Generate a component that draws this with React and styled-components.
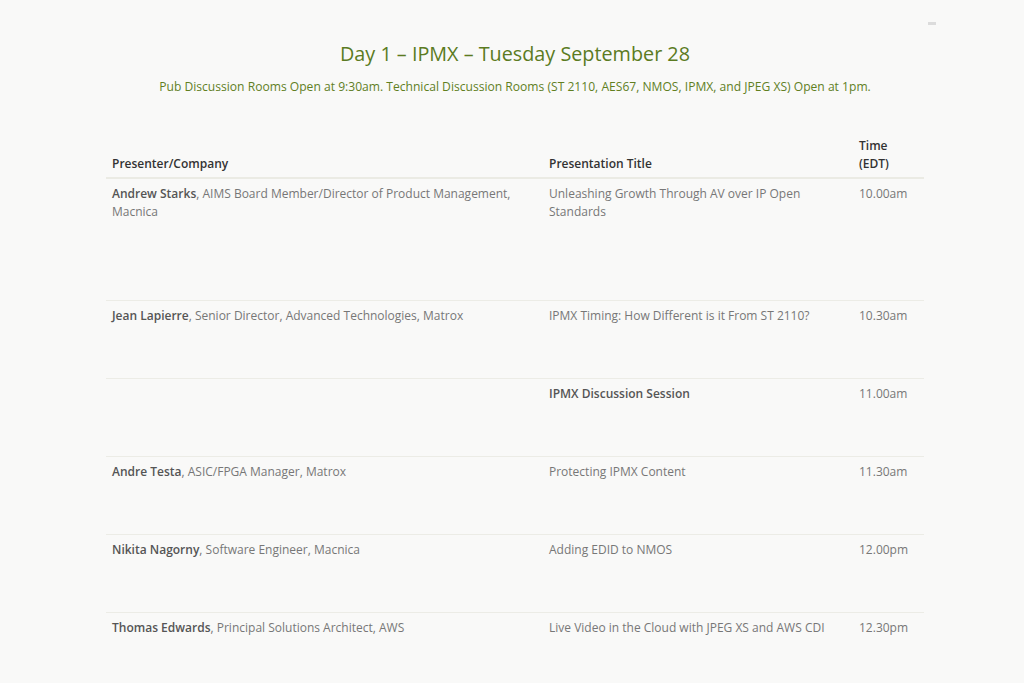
import React from 'react'
import styled, { createGlobalStyle } from 'styled-components'

const GlobalStyle = createGlobalStyle`
	body {
		margin: 0;
		background: #f9f9f8;
		font-family: "Open Sans", "Liberation Sans", sans-serif;
	}
`

const Page = styled.div`
	position: relative;
	width: 1024px;
	height: 683px;
	overflow: hidden;
	background: #f9f9f8;
	padding-top: 38px;
	box-sizing: border-box;
`
const Marker = styled.span`
	position: absolute;
	top: 22px;
	left: 928px;
	width: 8px;
	height: 3px;
	background: #dcdcdc;
`
const Heading = styled.h2`
	margin: 0 0 0 6px;
	text-align: center;
	font-size: 19.8px;
	font-weight: 400;
	line-height: 32px;
	color: #5b7b22;
`
const Notice = styled.p`
	margin: 8px 0 0 6px;
	text-align: center;
	font-size: 12.1px;
	line-height: 18px;
	color: #617f1f;
`
const Table = styled.div`
	width: 818px;
	margin: 5px 0 0 106px;
`
const Row = styled.div`
	display: grid;
	grid-template-columns: 437px 310px 71px;
	min-height: ${props => props.height || 78}px;
	border-bottom: ${props => props.head ? '2px solid #ebebe4' : '1px solid #ecece6'};
	align-items: ${props => props.head ? 'end' : 'start'};
	box-sizing: border-box;
`
const HeadCell = styled.div`
	padding: 0 6px 4px 6px;
	font-size: 12px;
	line-height: 18px;
	font-weight: 600;
	color: #333;
`
const Cell = styled.div`
	padding: 6px 6px 0 6px;
	font-size: 12px;
	line-height: 18px;
	color: #777;
	font-weight: ${props => props.strong ? 600 : 400};
	${props => props.strong && 'color: #555;'}
`
const Name = styled.strong`
	font-weight: 600;
	color: #555;
`

const sessions = [
	{ name: 'Andrew Starks', role: 'AIMS Board Member/Director of Product Management, Macnica', title: 'Unleashing Growth Through AV over IP Open Standards', time: '10.00am', height: 122 },
	{ name: 'Jean Lapierre', role: 'Senior Director, Advanced Technologies, Matrox', title: 'IPMX Timing: How Different is it From ST 2110?', time: '10.30am' },
	{ title: 'IPMX Discussion Session', strong: true, time: '11.00am' },
	{ name: 'Andre Testa', role: 'ASIC/FPGA Manager, Matrox', title: 'Protecting IPMX Content', time: '11.30am' },
	{ name: 'Nikita Nagorny', role: 'Software Engineer, Macnica', title: 'Adding EDID to NMOS', time: '12.00pm' },
	{ name: 'Thomas Edwards', role: 'Principal Solutions Architect, AWS', title: 'Live Video in the Cloud with JPEG XS and AWS CDI', time: '12.30pm' },
]

const App = () => (
	<Page>
		<GlobalStyle />
		<Marker />
		<Heading>Day 1 – IPMX – Tuesday September 28</Heading>
		<Notice>Pub Discussion Rooms Open at 9:30am. Technical Discussion Rooms (ST 2110, AES67, NMOS, IPMX, and JPEG XS) Open at 1pm.</Notice>
		<Table>
			<Row head>
				<HeadCell>Presenter/Company</HeadCell>
				<HeadCell>Presentation Title</HeadCell>
				<HeadCell>Time<br />(EDT)</HeadCell>
			</Row>
			{sessions.map((session, index) => (
				<Row key={index} height={session.height}>
					<Cell>
						{session.name && <><Name>{session.name}</Name>, {session.role}</>}
					</Cell>
					<Cell strong={session.strong}>{session.title}</Cell>
					<Cell>{session.time}</Cell>
				</Row>
			))}
		</Table>
	</Page>
)

export default App
